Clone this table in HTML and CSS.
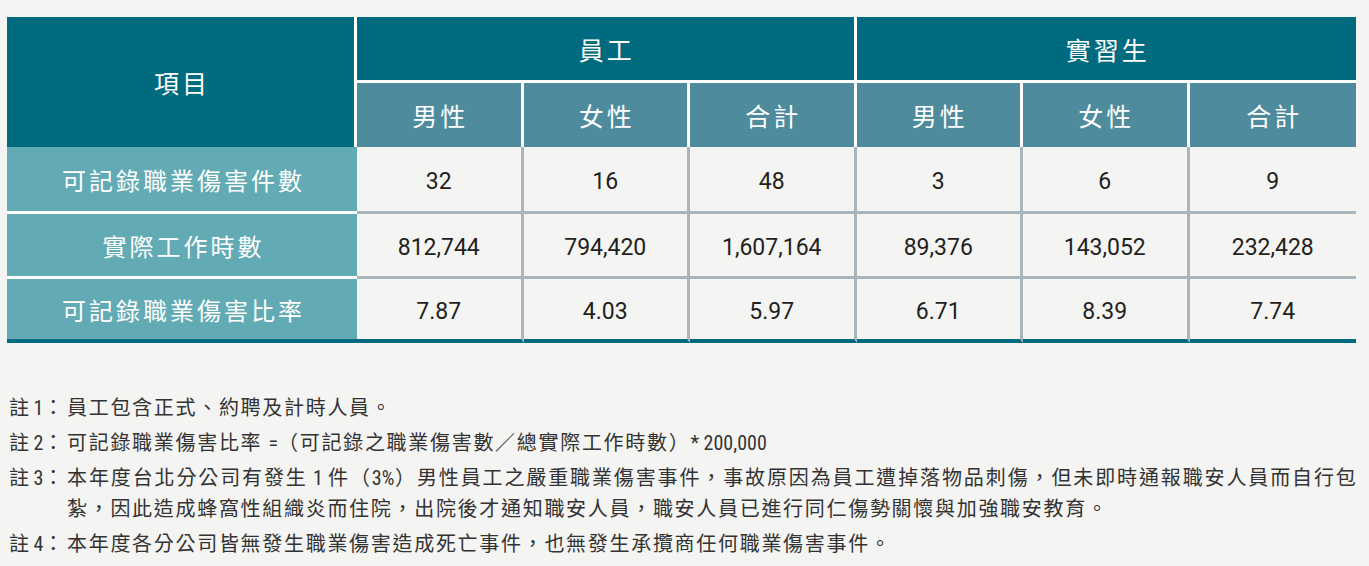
FILE: index.html
```html
<!DOCTYPE html>
<html lang="zh-Hant">
<head>
<meta charset="utf-8">
<title>職業傷害統計</title>
<link rel="stylesheet" href="styles.css">
</head>
<body>
<div class="page">
  <table class="stats">
    <colgroup>
      <col class="c-item">
      <col class="c-val"><col class="c-val"><col class="c-val">
      <col class="c-val"><col class="c-val"><col class="c-val">
    </colgroup>
    <thead>
      <tr class="h1">
        <th class="item" rowspan="2">項目</th>
        <th class="group sep" colspan="3">員工</th>
        <th class="group" colspan="3">實習生</th>
      </tr>
      <tr class="h2">
        <th class="sub sep">男性</th>
        <th class="sub sep">女性</th>
        <th class="sub sep">合計</th>
        <th class="sub sep">男性</th>
        <th class="sub sep">女性</th>
        <th class="sub">合計</th>
      </tr>
    </thead>
    <tbody>
      <tr class="r1">
        <td class="label">可記錄職業傷害件數</td>
        <td class="val sep">32</td>
        <td class="val sep">16</td>
        <td class="val sep">48</td>
        <td class="val sep">3</td>
        <td class="val sep">6</td>
        <td class="val">9</td>
      </tr>
      <tr class="r2">
        <td class="label">實際工作時數</td>
        <td class="val sep">812,744</td>
        <td class="val sep">794,420</td>
        <td class="val sep">1,607,164</td>
        <td class="val sep">89,376</td>
        <td class="val sep">143,052</td>
        <td class="val">232,428</td>
      </tr>
      <tr class="r3">
        <td class="label">可記錄職業傷害比率</td>
        <td class="val sep">7.87</td>
        <td class="val sep">4.03</td>
        <td class="val sep">5.97</td>
        <td class="val sep">6.71</td>
        <td class="val sep">8.39</td>
        <td class="val">7.74</td>
      </tr>
    </tbody>
  </table>

  <div class="notes">
    <div class="note">
      <span class="note-label">註 <span class="lat">1</span>：</span>
      <span class="note-body">員工包含正式、約聘及計時人員。</span>
    </div>
    <div class="note">
      <span class="note-label">註 <span class="lat">2</span>：</span>
      <span class="note-body">可記錄職業傷害比率 <span class="lat">=</span>（可記錄之職業傷害數／總實際工作時數）<span class="lat">* 200,000</span></span>
    </div>
    <div class="note">
      <span class="note-label">註 <span class="lat">3</span>：</span>
      <span class="note-body"><span class="jl">本年度台北分公司有發生<span class="lat"> 1 </span>件（<span class="lat">3%</span>）男性員工之嚴重職業傷害事件，事故原因為員工遭掉落物品刺傷，但未即時通報職安人員而自行包</span>紮，因此造成蜂窩性組織炎而住院，出院後才通知職安人員，職安人員已進行同仁傷勢關懷與加強職安教育。</span>
    </div>
    <div class="note">
      <span class="note-label">註 <span class="lat">4</span>：</span>
      <span class="note-body">本年度各分公司皆無發生職業傷害造成死亡事件，也無發生承攬商任何職業傷害事件。</span>
    </div>
  </div>
</div>
</body>
</html>
```

FILE: styles.css
```css
html, body {
  margin: 0;
  padding: 0;
}

body {
  background: #f4f4f2;
  font-family: Roboto, "Noto Sans CJK TC", sans-serif;
  color: #231f20;
}

.page {
  padding: 17px 0 0 7px;
}

.stats {
  width: 1349px;
  border-collapse: separate;
  border-spacing: 0;
  table-layout: fixed;
}

.c-item { width: 350px; }
.c-val { width: 166.5px; }

.stats th,
.stats td {
  box-sizing: border-box;
  padding: 0;
  text-align: center;
  vertical-align: middle;
  font-weight: 400;
}

.stats th {
  color: #ffffff;
  font-family: "Noto Sans CJK TC", sans-serif;
  font-size: 25px;
  letter-spacing: 3px;
  padding: 0 0 0 3px;
}

.item {
  background: #006a7e;
  border-right: 3px solid #ffffff;
}

.group {
  background: #006a7e;
  border-bottom: 3px solid #ffffff;
  height: 66px;
}

.sub {
  background: #4e8c9d;
  height: 64px;
}

.stats th.sep {
  border-right: 3px solid #ffffff;
}

.label {
  background: #62abb4;
  color: #ffffff;
  font-family: "Noto Sans CJK TC", sans-serif;
  font-size: 24px;
  letter-spacing: 3px;
  border-bottom: 3px solid #ffffff;
}

.stats td.label {
  padding: 1px 0 0 3px;
}

.val {
  font-size: 23px;
  color: #231f20;
  border-bottom: 3px solid #a9b4bb;
}

.stats td.val {
  padding-top: 5px;
}

.val.sep {
  border-right: 3px solid #a9b4bb;
}

.r1 td { height: 67px; }
.r2 td { height: 65px; }
.r3 td {
  height: 64px;
  border-bottom: 4px solid #006a7e;
}

.notes {
  margin-top: 48px;
  margin-left: 2px;
  width: 1348px;
}

.note {
  display: flex;
  font-family: "Noto Sans CJK TC", sans-serif;
  font-size: 20px;
  line-height: 31px;
  color: #333333;
  margin-bottom: 4px;
}

.note-label {
  flex: none;
  width: 58px;
  white-space: nowrap;
}

.note-body {
  flex: 1;
  letter-spacing: 1.7px;
  text-align: justify;
}

.lat {
  font-family: "Liberation Sans Narrow", "Roboto Condensed", Roboto, sans-serif;
  font-size: 20px;
  line-height: 1;
  letter-spacing: 0;
}

.jl {
  display: block;
  letter-spacing: 1.2px;
  text-align: justify;
  text-align-last: justify;
}
```
